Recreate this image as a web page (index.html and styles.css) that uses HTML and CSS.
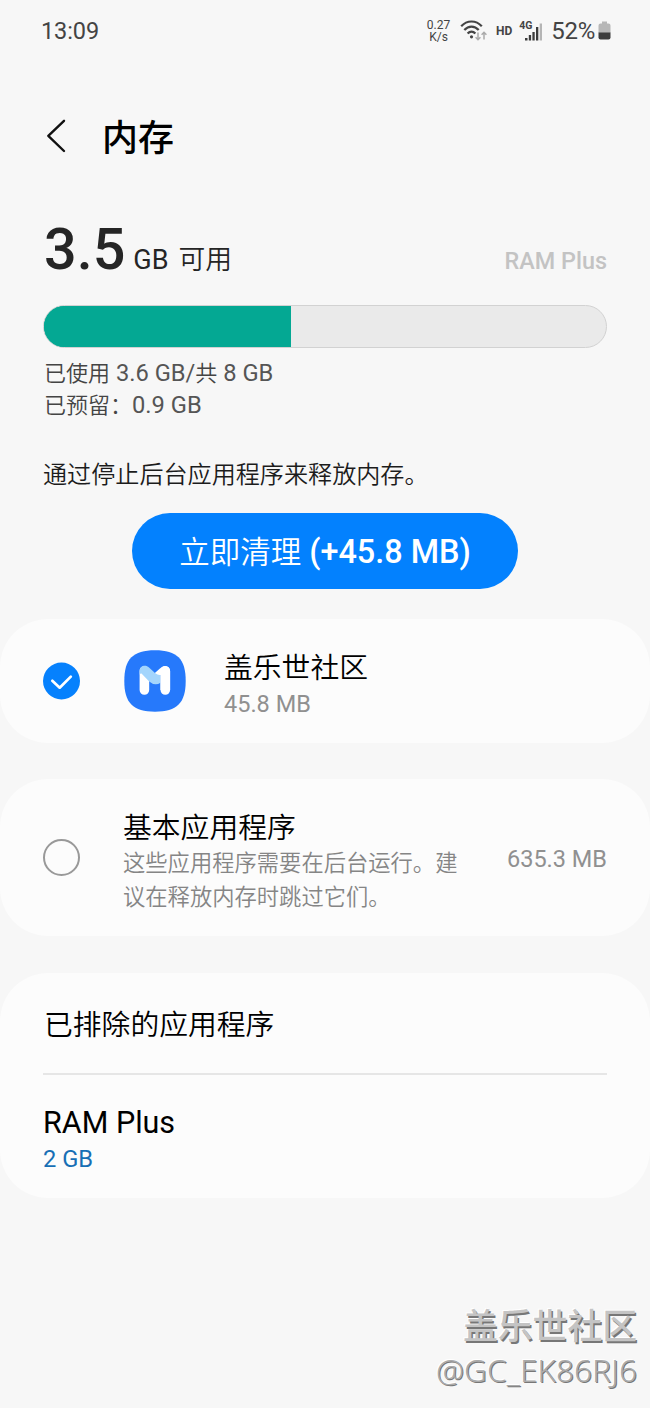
FILE: index.html
```html
<!DOCTYPE html>
<html lang="zh-CN">
<head>
<meta charset="utf-8">
<title>内存</title>
<link rel="stylesheet" href="styles.css">
</head>
<body>
<header class="status">
  <span class="clock">13:09</span>
  <div class="indicators">
    <span class="speed"><span>0.27</span><span>K/s</span></span>
    <svg class="wifi" width="28" height="22" viewBox="0 0 28 22" fill="none" stroke="#444" stroke-width="2.200">
      <path d="M1.200 6.300C7-.1 16-.1 21.800 6.300M4.300 10.100C8.500 5.500 14.500 5.500 18.700 10.100M7.600 13.500C10 11 13 11 15.400 13.500"/>
      <circle cx="11.500" cy="16.800" r="1.600" fill="#444" stroke="none"/>
      <path d="M18 12.500v7M15.600 17.200L18 19.700l2.400-2.500M24 19.500v-7M21.600 14.800L24 12.300l2.400 2.500" stroke="#aaa" stroke-width="1.500"/>
    </svg>
    <span class="hd">HD</span>
    <span class="signal">
      <svg width="24" height="22" viewBox="0 0 24 22" fill="#3c3c3c">
        <rect x="6" y="18" width="2.500" height="2.500"/><rect x="9.800" y="15" width="2.300" height="5.500"/><rect x="13.400" y="12" width="2.300" height="8.500"/><rect x="17" y="7" width="2.300" height="13.500"/><rect x="20.700" y="3.500" width="2.300" height="17" fill="#b5b5b5"/>
      </svg>
      <span class="net">4G</span>
    </span>
    <span class="percent">52%</span>
    <svg class="battery" width="13" height="20" viewBox="0 0 13 20">
      <path d="M4 .5h5v2h1.500Q12.500 2.500 12.500 4.500V12H.5V4.500Q.5 2.500 2.500 2.500H4z" fill="#b7b7b7"/>
      <path d="M.5 11.500h12v5q0 2-2 2h-8q-2 0-2-2z" fill="#3c3c3c"/>
    </svg>
  </div>
</header>

<div class="titlebar">
  <svg width="22" height="36" viewBox="0 0 22 36" fill="none" stroke="#111" stroke-width="2.400" stroke-linecap="round" stroke-linejoin="round"><path d="M20 2.800L4.300 17.800L20 33"/></svg>
  <h1>内存</h1>
</div>

<section class="summary">
  <div class="headline">
    <div class="available"><strong>3.5</strong><span class="unit">GB</span><span class="free">可用</span></div>
    <span class="plus-label">RAM Plus</span>
  </div>
  <div class="meter"><div class="meter-fill" style="width:44%"></div></div>
  <p class="usage">已使用<span class="latin"> 3.6 GB/</span>共<span class="latin"> 8 GB</span></p>
  <p class="usage">已预留：<span class="latin">0.9 GB</span></p>
  <p class="hint">通过停止后台应用程序来释放内存。</p>
  <button class="clean"><span class="clean-text">立即清理</span> (+45.8 MB)</button>
</section>

<section class="card app-card">
  <svg class="check" width="38" height="38" viewBox="0 0 38 38"><circle cx="18.500" cy="19" r="18.500" fill="#0681fd"/><path d="M9.300 18.800L16.700 25.700L27.800 14.600" fill="none" stroke="#fff" stroke-width="2.700" stroke-linecap="round" stroke-linejoin="round"/></svg>
  <svg class="app-icon" width="62" height="62" viewBox="0 0 62 62">
    <path d="M31 .3C53 .3 61.700 9 61.700 31S53 61.700 31 61.700.3 53 .3 31 9 .3 31 .3z" fill="#2679fb"/>
    <path d="M20.400 21V40M41.300 21V40" stroke="#fff" stroke-width="9.600" stroke-linecap="round" fill="none"/>
    <path d="M15.600 25.500V21C15.600 16 21.500 14.300 25 17.500L31 23L36.500 18V32.800Q31 36.500 25.200 31.500L17.500 23.500Q15.600 23 15.600 25.500z" fill="#a3d5fc"/>
    <path d="M31 23L37.500 17.300Q41 14.600 44.500 17.300Q46.100 19 46.100 21V40H36.500V25Q34 25.500 31 23z" fill="#fff"/>
  </svg>
  <div class="text"><div class="name">盖乐世社区</div><div class="size">45.8 MB</div></div>
</section>

<section class="card basic-card">
  <span class="radio"></span>
  <div class="text"><div class="name">基本应用程序</div><div class="desc">这些应用程序需要在后台运行。建<br>议在释放内存时跳过它们。</div></div>
  <span class="size amount">635.3 MB</span>
</section>

<section class="card list-card">
  <div class="excluded">已排除的应用程序</div>
  <div class="ram"><div class="ram-name">RAM Plus</div><div class="value">2 GB</div></div>
</section>

<footer class="watermark"><div class="community">盖乐世社区</div><div class="user">@GC_EK86RJ6</div></footer>
</body>
</html>
```

FILE: styles.css
```css
* { box-sizing: border-box; }
body { margin: 0; width: 650px; height: 1408px; overflow: hidden; display: flex; flex-direction: column; background: #f7f7f7; color: #111; font-family: Roboto, "Noto Sans CJK SC", sans-serif; }
h1, p { margin: 0; }
svg { display: block; flex: none; }
.status { height: 62px; padding: 0 39px 0 41px; display: flex; justify-content: space-between; align-items: center; color: #444; }
.clock { font-size: 23.500px; letter-spacing: -.1px; }
.indicators { display: flex; align-items: center; }
.speed { width: 25px; display: flex; flex-direction: column; align-items: center; font-size: 12px; line-height: 12px; }
.wifi { margin: 0 0 0 9px; }
.hd { margin-left: 8px; font-size: 12px; font-weight: 700; }
.signal { position: relative; margin-left: 7px; }
.net { position: absolute; left: 0; top: 1px; font-size: 10.500px; line-height: 10px; font-weight: 700; }
.percent { margin-left: 8px; font-size: 24px; letter-spacing: -.3px; }
.battery { margin-left: 3px; }
.titlebar { height: 148px; padding: 0 0 0 44px; display: flex; align-items: center; gap: 36px; }
h1 { padding-top: 6px; font-size: 36px; line-height: 44px; font-weight: 500; color: #000; }
.summary { height: 409px; padding: 0 43px; display: flex; flex-direction: column; }
.headline { height: 95px; padding: 4px 0 0 1px; display: flex; justify-content: space-between; align-items: baseline; }
.available { line-height: 72px; color: #252525; }
.available strong { font-size: 57.500px; font-weight: 500; }
.unit { margin-left: 8px; font-size: 27px; }
.free { margin-left: 10px; font-size: 26.800px; font-weight: 350; }
.plus-label { font-size: 23.400px; font-weight: 500; color: #c3c3c3; }
.meter { height: 43px; flex: none; margin-bottom: 10px; overflow: hidden; border: 1px solid #d2d2d2; border-radius: 22px; background: linear-gradient(90deg, #04a893 44%, #eaeaea 44%) border-box; }
.meter-fill { height: 100%; background: #04a893; }
.usage { height: 32px; padding-left: 1px; font-size: 22px; line-height: 32px; font-weight: 350; color: #444; }
.latin { font-size: 23.700px; line-height: 31px; font-weight: 400; white-space: pre; color: #555; }
.hint { margin-top: 35px; font-size: 24.100px; line-height: 36px; font-weight: 350; color: #1c1c1c; }
.clean { width: 386px; height: 76px; flex: none; margin: 20px 0 0; padding: 2px 0 0; align-self: center; border: 0; border-radius: 38px; background: #0381fe; color: #fff; font: 500 32.400px/74px Roboto, "Noto Sans CJK SC", sans-serif; }
.clean-text { font-size: 30.500px; font-weight: 350; }
.card { border-radius: 48px; background: #fcfcfc; display: flex; }
.app-card { height: 124px; padding: 7px 43px 0; align-items: center; }
.check, .app-icon { margin-top: -7px; }
.app-icon { margin-right: 38px; margin-left: 43px; }
.name { font-size: 28.800px; line-height: 38px; font-weight: 350; color: #000; }
.size { font-size: 23.500px; line-height: 34px; color: #909090; }
.basic-card { height: 157px; margin-top: 36px; padding: 30px 43px 0; }
.radio { width: 37px; height: 37px; margin-top: 30px; border: 2px solid #999; border-radius: 50%; }
.basic-card .text { margin-left: 43px; }
.desc { margin-top: -1px; font-size: 22.300px; line-height: 34px; font-weight: 350; color: #858585; }
.amount { margin: 33px 0 0 auto; }
.list-card { height: 225px; margin-top: 37px; padding: 0 43px; flex-direction: column; }
.excluded { height: 102px; padding-left: 1px; border-bottom: 2px solid #e6e6e6; font-size: 28.800px; line-height: 105px; font-weight: 350; color: #000; }
.ram { padding-top: 29px; }
.ram-name { font-size: 30.500px; line-height: 38px; color: #000; }
.value { font-size: 23.700px; line-height: 34px; color: #176fb5; }
.watermark { margin: 104px 13px 0 0; text-align: right; color: #c4c4c4; text-shadow: 1.500px 1.500px 0 #777, -1px -1px 0 #fff; }
.community { font: 500 34.800px/44px "Noto Sans CJK SC", sans-serif; }
.user { font: 300 31.600px/47px "Noto Sans", sans-serif; color: #aaa; text-shadow: 1px 1px 0 #777, -1px -1px 0 #fff; }
```
